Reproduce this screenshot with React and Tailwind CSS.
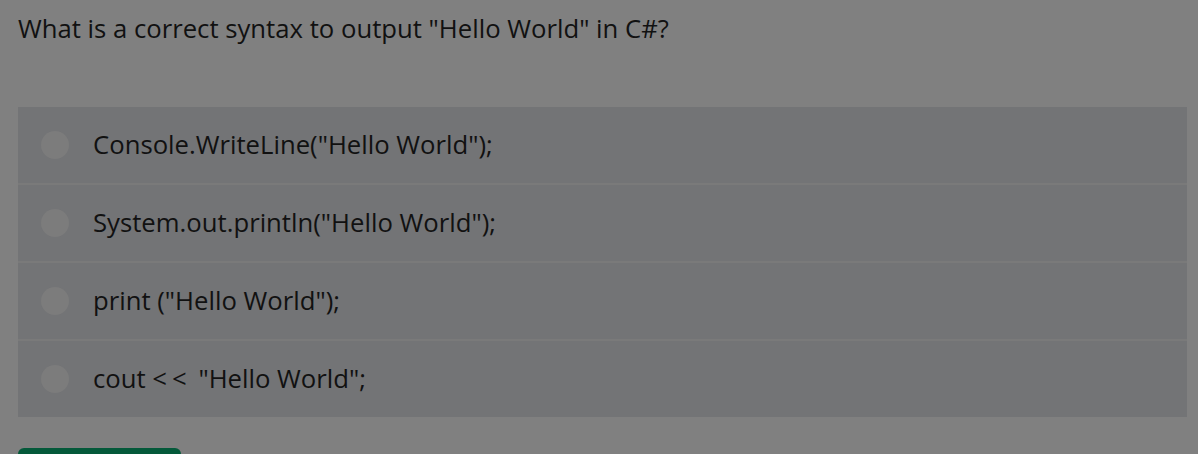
import React, { useState } from 'react';

const OPTIONS = [
  'Console.WriteLine("Hello World");',
  'System.out.println("Hello World");',
  'print ("Hello World");',
  null, // cout line, rendered with spaced chevrons
];

export default function App() {
  const [picked, setPicked] = useState(null);

  return (
    <div
      className="h-[454px] w-full bg-[#808080] px-[18px] pt-[13px] text-[#111] overflow-hidden"
      style={{ fontFamily: '"Open Sans", "Noto Sans", sans-serif' }}
    >
      <h2 className="text-[25.7px] leading-[32px] font-normal">
        What is a correct syntax to output "Hello World" in C#?
      </h2>

      {/* Answer list */}
      <div className="mt-[62px] w-[1169px] flex flex-col gap-[2px] bg-[#7a7a7a]">
        {OPTIONS.map((opt, i) => (
          <button
            key={i}
            type="button"
            onClick={() => setPicked(i)}
            className="h-[76px] w-full bg-[#737476] flex items-center text-left"
          >
            <span
              className={`ml-[23px] w-[28px] h-[28px] rounded-full shrink-0 ${
                picked === i ? 'bg-[#04593a]' : 'bg-[#7c7c7c]'
              }`}
            />
            <span className="ml-[24px] text-[25.7px] leading-[32px]">
              {opt ?? (
                <>
                  cout <span className="tracking-[5px]">&lt;&lt;</span> "Hello World";
                </>
              )}
            </span>
          </button>
        ))}
      </div>

      <button
        type="button"
        className="mt-[31px] w-[163px] h-[60px] rounded-[6px] bg-[#04593a] text-white flex items-end justify-center pb-2"
      >
        Submit
      </button>
    </div>
  );
}
